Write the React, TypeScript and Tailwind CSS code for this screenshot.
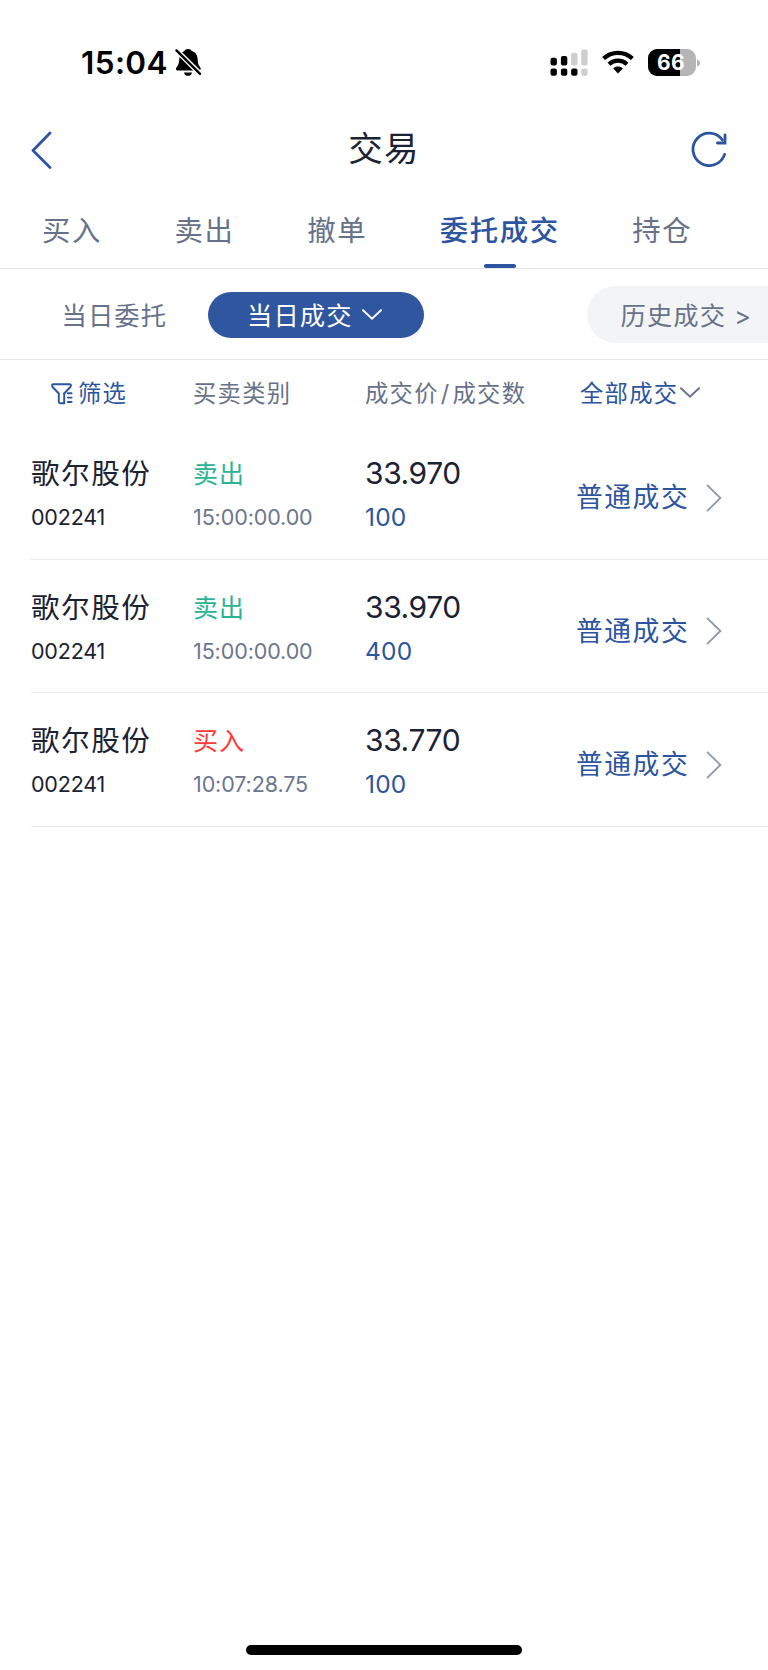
type Trade = {
  name: string;
  code: string;
  side: "买入" | "卖出";
  time: string;
  price: string;
  qty: string;
  status: string;
};

const TABS = ["买入", "卖出", "撤单", "委托成交", "持仓"];
const ACTIVE_TAB = "委托成交";

const TRADES: Trade[] = [
  { name: "歌尔股份", code: "002241", side: "卖出", time: "15:00:00.00", price: "33.970", qty: "100", status: "普通成交" },
  { name: "歌尔股份", code: "002241", side: "卖出", time: "15:00:00.00", price: "33.970", qty: "400", status: "普通成交" },
  { name: "歌尔股份", code: "002241", side: "买入", time: "10:07:28.75", price: "33.770", qty: "100", status: "普通成交" },
];

// ── Status bar icons ──────────────────────────────────────────────────────────
function BellOffIcon() {
  return (
    <svg width="27" height="29" viewBox="0 0 27 29" className="ml-[7px]">
      <path d="M13 1C15.1 1 16.4 1.9 16.8 2.9C20.6 4.1 22.4 7.1 22.6 11C22.9 15.8 23.6 17.2 25.2 19.3C26.3 20.9 25.6 22.4 24 22.4H2.8C0.8 22.4 0.4 20.5 1.5 19.2C3.4 17 4 15.8 4.3 11C4.5 7.1 6 4.1 9.4 2.9C9.9 1.9 11 1 13 1Z" />
      <path d="M9 24.4H17C16.6 26.6 15.2 27.8 13 27.8S9.4 26.6 9 24.4Z" />
      <path d="M0 0.8L26.5 27.2" stroke="#fff" strokeWidth="5.2" />
      <path d="M1.5 2.4L25 25.8" stroke="#000" strokeWidth="2.4" strokeLinecap="round" />
    </svg>
  );
}

function SignalIcon() {
  return (
    <svg width="38" height="28" viewBox="0 0 38 28">
      <rect x="0.5" y="8.8" width="6.4" height="7.8" rx="2" />
      <rect x="10.9" y="7" width="6.4" height="9.6" rx="2" />
      <rect x="21.1" y="3.8" width="6.4" height="12.8" rx="2" fill="#cecece" />
      <rect x="31.2" y="0.6" width="6.4" height="16" rx="2" fill="#cecece" />
      <rect x="0.5" y="19.6" width="6.4" height="7.2" rx="2" />
      <rect x="10.9" y="19.6" width="6.4" height="7.2" rx="2" />
      <rect x="21.1" y="19.6" width="6.4" height="7.2" rx="2" />
      <rect x="31.2" y="19.6" width="6.4" height="7.2" rx="2" fill="#cecece" />
    </svg>
  );
}

function WifiIcon() {
  return (
    <svg width="32" height="24" viewBox="0 0 32 24" fill="none" stroke="#000" strokeWidth="4.2">
      <path d="M1.6 8.6C9.6 0.9 22.4 0.9 30.4 8.6" />
      <path d="M7 14.2C12 9.4 20 9.4 25 14.2" />
      <path d="M11.2 18.4C13.8 15.9 18.2 15.9 20.8 18.4L16 23.4Z" fill="#000" stroke="none" />
    </svg>
  );
}

function StatusBar() {
  return (
    <div className="flex h-[108px] items-center justify-between pt-[17px] pr-[67px] pl-[81px]">
      <div className="flex items-center">
        <span className="text-[31.5px] leading-none font-semibold tracking-[0.4px] text-black">15:04</span>
        <BellOffIcon />
      </div>
      <div className="flex items-center">
        <SignalIcon />
        <span className="-mt-px ml-[14px]"><WifiIcon /></span>
        <div className="ml-[14px] flex h-[27px] w-[48px] items-center justify-center rounded-[9px] bg-[linear-gradient(90deg,#000_66%,#b5b5b5_66%)]">
          <span className="pr-px text-[21px] leading-none font-bold tracking-[0.4px] text-white">66</span>
        </div>
        <svg width="4" height="8" viewBox="0 0 4 8" className="ml-[1.5px]">
          <path d="M0 0.5C4.2 1.6 4.2 6.4 0 7.5Z" fill="#b5b5b5" />
        </svg>
      </div>
    </div>
  );
}

function Chevron({ className }: { className?: string }) {
  return (
    <svg width="20" height="12" viewBox="0 0 20 12" fill="none" stroke="currentColor" strokeWidth="1.9" strokeLinecap="round" className={className}>
      <path d="M1 1.2L10 9.6L19 1.2" />
    </svg>
  );
}

function NavBar() {
  return (
    <div className="flex h-[84px] items-center justify-between pr-[41px] pl-[31px]">
      <svg width="22" height="38" viewBox="0 0 22 38" fill="none" stroke="#2d549f" strokeWidth="2.8" strokeLinecap="round" strokeLinejoin="round">
        <path d="M19 2L2 19.5L19 36.5" />
      </svg>
      <h1 className="pb-px pl-[24px] text-[34.5px] leading-none tracking-[1.2px] text-[#1b2233]">交易</h1>
      <svg width="36" height="36" viewBox="0 0 36 36" fill="none" stroke="#2d549f" strokeWidth="2.8" className="-mt-0.5">
        <path d="M33.6 23.4A16.2 16.2 0 1 1 31.4 9" strokeLinecap="round" />
        <path d="M26.4 12H34V4" strokeLinecap="round" />
      </svg>
    </div>
  );
}

function TradeRow({ trade }: { trade: Trade }) {
  return (
    <div className="ml-[31px] flex h-[133.66px] border-b border-[#eaebed] pt-[25px]">
      <div className="w-[162px]">
        <div className="h-[46px] pt-[2px] text-[28.6px] leading-[42px] tracking-[1.5px] text-[#1b2233]">{trade.name}</div>
        <div className="text-[21.5px] leading-[40px] tracking-[-0.2px] text-[#1b2233]">{trade.code}</div>
      </div>
      <div className="w-[172px]">
        <div className={`h-[46px] pt-[2px] text-[25px] leading-[42px] tracking-[1px] ${trade.side === "买入" ? "text-[#ff3a3a]" : "text-[#2bb393]"}`}>
          {trade.side}
        </div>
        <div className="text-[21.5px] leading-[40px] tracking-[-0.1px] text-[#6b768e]">{trade.time}</div>
      </div>
      <div className="w-[211px]">
        <div className="h-[46px] pt-px text-[30px] leading-[42px] tracking-[-0.4px] text-[#1b2233]">{trade.price}</div>
        <div className="text-[24.5px] leading-[40px] tracking-[0.2px] text-[#2d549f]">{trade.qty}</div>
      </div>
      <div className="flex h-[93px] items-center">
        <span className="text-[26.8px] leading-none tracking-[1.5px] text-[#2d549f]">{trade.status}</span>
        <svg width="16" height="28" viewBox="0 0 16 28" fill="none" stroke="#8f98aa" strokeWidth="1.8" className="ml-[17px]">
          <path d="M1 0.8L14.4 14L1 27.2" />
        </svg>
      </div>
    </div>
  );
}

export default function App() {
  return (
    <div className="flex h-[1670px] w-[768px] flex-col overflow-hidden bg-white font-[Inter,'Noto_Sans_CJK_SC',sans-serif]">
      <StatusBar />
      <NavBar />

      {/* Tabs */}
      <div className="flex h-[77px] gap-[72.6px] border-b border-[#e6e7ea] pl-[42px]">
        {TABS.map((tab) => (
          <div
            key={tab}
            className={`flex shrink-0 flex-col items-center justify-between text-[28.4px] tracking-[1.6px] ${
              tab === ACTIVE_TAB ? "font-medium text-[#2d549f]" : "text-[#67728a]"
            }`}
          >
            <span className="pt-[18px] leading-[42px]">{tab}</span>
            {tab === ACTIVE_TAB && <span className="h-1 w-8 rounded-full bg-[#2d549f]" />}
          </div>
        ))}
      </div>

      {/* Sub tabs */}
      <div className="flex h-[91px] items-center border-b border-[#e6e7ea] pt-px pl-[61.5px] text-[25.3px] tracking-[1.1px] text-[#67728a]">
        <span className="w-[146.5px] shrink-0 pt-[2px]">当日委托</span>
        <button className="flex h-[46px] w-[216px] shrink-0 items-center rounded-full bg-[#2f569f] pt-[2px] pl-[39px] tracking-[1.1px] text-white">
          当日成交
          <Chevron className="-mt-[2px] ml-[9px]" />
        </button>
        <button className="ml-[162.5px] flex h-[57px] w-[220px] shrink-0 items-center rounded-full bg-[#f3f4f6] pt-[2px] pl-[34px] tracking-[1.1px]">
          历史成交 &gt;
        </button>
      </div>

      {/* Column headings */}
      <div className="flex h-[66px] items-center pt-[2px] pl-[51px] text-[23.3px] tracking-[1.3px] text-[#67728a]">
        <div className="flex w-[142px] items-center text-[#2d549f]">
          <svg width="22" height="22" viewBox="0 0 22 22" fill="none" stroke="currentColor" strokeWidth="1.9" strokeLinejoin="round" strokeLinecap="round" className="-mt-px mr-[5px]">
            <path d="M13.2 20.3H9.6Q7.8 20.3 7.8 18.5V10.5L1.6 4Q0.2 1.2 2.6 1.2H18.4Q20.8 1.2 19.4 4L13.2 10.5" />
            <path d="M13.2 10.5V20.3M16.8 10.2H20.6M16.8 14.6H20.6M16.8 19H20.6" />
          </svg>
          筛选
        </div>
        <span className="w-[172px]">买卖类别</span>
        <span className="w-[215px]">成交价<span className="px-[2px]">/</span>成交数</span>
        <span className="text-[#2d549f]">全部成交</span>
        <Chevron className="-mt-[3px] ml-[2px]" />
      </div>

      {TRADES.map((trade, i) => (
        <TradeRow key={i} trade={trade} />
      ))}

      {/* Home indicator */}
      <div className="mx-auto mt-auto mb-[15px] h-[10px] w-[276px] rounded-full bg-black" />
    </div>
  );
}
